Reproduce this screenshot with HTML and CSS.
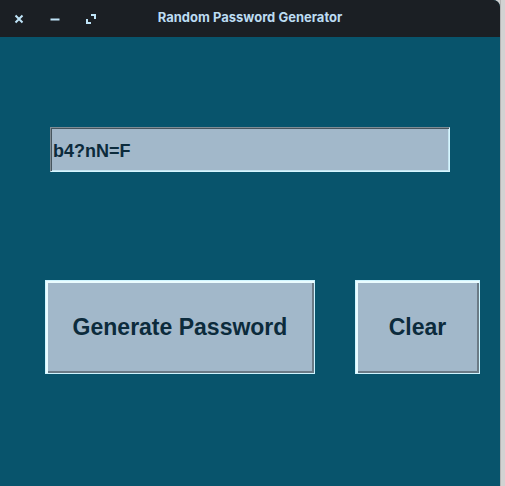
FILE: index.html
```html
<!DOCTYPE html>
<html>
<head>
<meta charset="utf-8">
<link rel="stylesheet" href="styles.css">
</head>
<body>
<div class="screen">
  <div class="window">
    <div class="titlebar">
      <div class="controls">
        <svg class="ctl" width="12" height="12" viewBox="0 0 12 12"><path d="M2.5 2.5 L9.5 9.5 M9.5 2.5 L2.5 9.5" stroke="#bfe3f7" stroke-width="2" fill="none"/></svg>
        <svg class="ctl" width="12" height="12" viewBox="0 0 12 12"><path d="M1.5 6.5 H10.5" stroke="#bfe3f7" stroke-width="2" fill="none"/></svg>
        <svg class="ctl" width="12" height="12" viewBox="0 0 12 12"><path d="M6 2 H10 V6 M2 6 V10 H6" stroke="#bfe3f7" stroke-width="2" fill="none"/></svg>
      </div>
      <div class="title">Random Password Generator</div>
    </div>
    <div class="content">
      <div class="entry">b4?nN=F</div>
      <div class="buttons">
        <div class="btn btn-gen">Generate Password</div>
        <div class="btn btn-clear">Clear</div>
      </div>
    </div>
  </div>
  <div class="desk"></div>
</div>
</body>
</html>
```
FILE: styles.css
```css
* { box-sizing: border-box; }
html, body { margin: 0; padding: 0; }
body { background: #cfcfcf; width: 505px; height: 486px; overflow: hidden; }
.screen { display: flex; height: 486px; }
.window {
  width: 500px;
  height: 486px;
  display: flex;
  flex-direction: column;
  background: #08546c;
  border-top-right-radius: 7px;
  overflow: hidden;
}
.desk {
  width: 5px;
  background: #d2d2d2;
  border-left: 1px solid #b4b4b4;
}
.titlebar {
  height: 37px;
  background: #1b1f24;
  position: relative;
  display: flex;
  align-items: center;
}
.controls {
  display: flex;
  align-items: center;
  gap: 24px;
  padding-left: 13px;
}
.ctl { display: block; }
.title {
  position: absolute;
  left: 0; right: 0; top: 0;
  height: 35px;
  line-height: 35px;
  text-align: center;
  font-family: Inter, "Noto Sans", sans-serif;
  font-weight: 700;
  font-size: 13px;
  color: #bcdcf2;
}
.content {
  flex: 1;
  padding: 90px 0 0 0;
  display: flex;
  flex-direction: column;
}
.entry {
  margin-left: 50px;
  width: 400px;
  height: 45px;
  background: #a2b8ca;
  border-style: solid;
  border-width: 1px;
  border-color: #808c94 #d6f6ff #d6f6ff #808c94;
  box-shadow: inset 1px 1px 0 #46555e, inset -1px -1px 0 #c4e4f0;
  padding-left: 2px;
  padding-top: 3px;
  display: flex;
  align-items: center;
  font-family: "Liberation Sans", Arial, sans-serif;
  font-weight: 700;
  font-size: 18px;
  color: #0c2b3c;
}
.buttons {
  display: flex;
  margin-top: 108px;
  padding-left: 45px;
  gap: 40px;
}
.btn {
  height: 94px;
  background: #a2b8ca;
  border: 1px solid #cdf4ff;
  box-shadow: inset 2px 2px 0 #eafcff, inset -2px -2px 0 #6b7a85;
  display: flex;
  align-items: center;
  justify-content: center;
  font-family: "Liberation Sans", Arial, sans-serif;
  font-weight: 700;
  font-size: 23px;
  color: #0c2b3c;
  padding-top: 1px;
}
.btn-gen { width: 270px; }
.btn-clear { width: 125px; }
```
